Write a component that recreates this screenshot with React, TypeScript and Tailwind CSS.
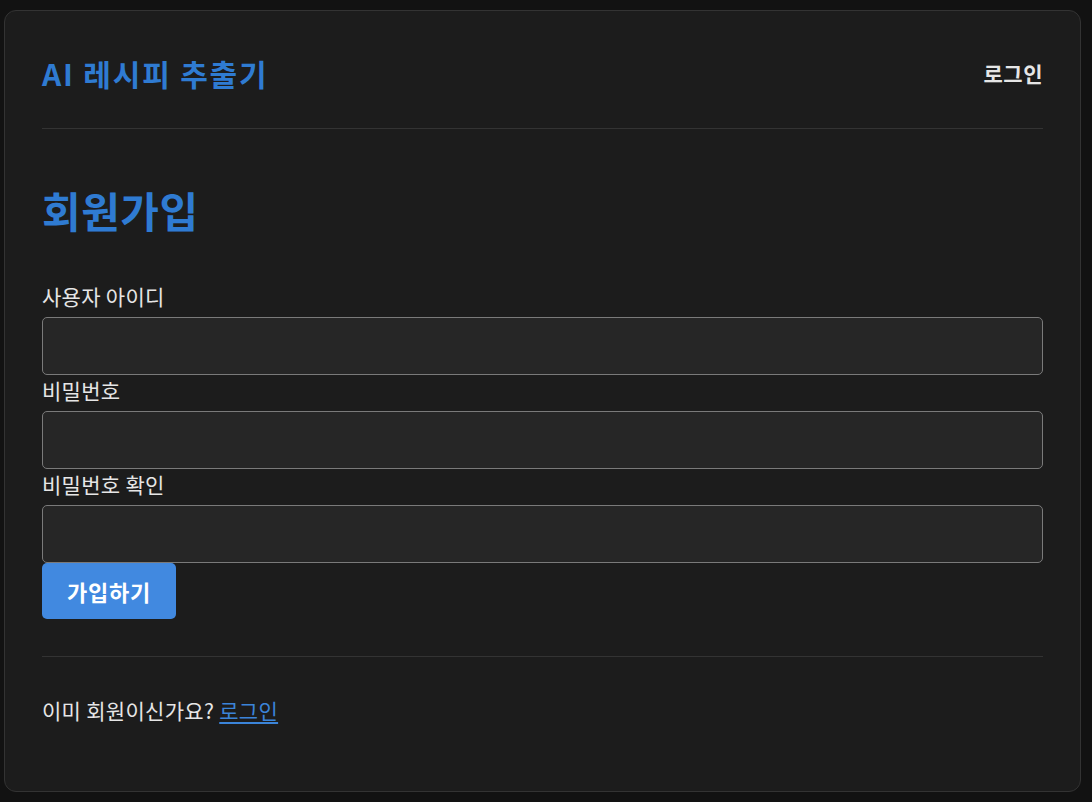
import React from 'react';

const font = { fontFamily: '"Noto Sans CJK KR", "Noto Sans", sans-serif' };

const Field: React.FC<{ label: string; type?: string }> = ({ label, type = 'text' }) => (
  <div className="flex flex-col">
    <label className="text-[21px] leading-[30px] tracking-[0.3px] text-[#e6e6e6] mb-[6px]">{label}</label>
    <input
      type={type}
      className="h-[58px] w-full rounded-[5px] border border-[#7a7a7a] bg-[#262626] px-3 text-[#e6e6e6] outline-none"
    />
  </div>
);

export default function App() {
  return (
    <div className="min-h-[802px] w-full bg-[#121212] px-[4px] pt-[10px] pb-[10px]" style={font}>
      <div className="w-[1077px] rounded-[12px] border border-[#333333] bg-[#1c1c1c] px-[37px] pt-[41px] pb-[66px]">
        <header className="flex items-center justify-between border-b border-[#333333] pb-[33px]">
          <h2 className="text-[30px] leading-[43px] tracking-[1.8px] font-bold text-[#2f7bd2]">AI 레시피 추출기</h2>
          <a className="text-[21px] tracking-[0.5px] font-bold text-[#e6e6e6]">로그인</a>
        </header>

        <h1 className="mt-[51px] text-[42px] leading-[60px] tracking-[0.5px] font-bold text-[#2f7bd2]">회원가입</h1>

        <form className="mt-[41px] flex flex-col">
          <Field label="사용자 아이디" />
          <Field label="비밀번호" type="password" />
          <Field label="비밀번호 확인" type="password" />
          <div>
            <button
              type="button"
              className="h-[56px] rounded-[5px] bg-[#4189e0] px-[25px] text-[22px] tracking-[0.8px] font-bold text-white"
            >
              가입하기
            </button>
          </div>
        </form>

        <div className="mt-[37px] border-t border-[#333333] pt-[38px]">
          <p className="text-[21px] leading-[30px] tracking-[0.3px] text-[#e6e6e6]">
            이미 회원이신가요?{' '}
            <a className="text-[#3b84d8] underline underline-offset-[3px]">로그인</a>
          </p>
        </div>
      </div>
    </div>
  );
}
